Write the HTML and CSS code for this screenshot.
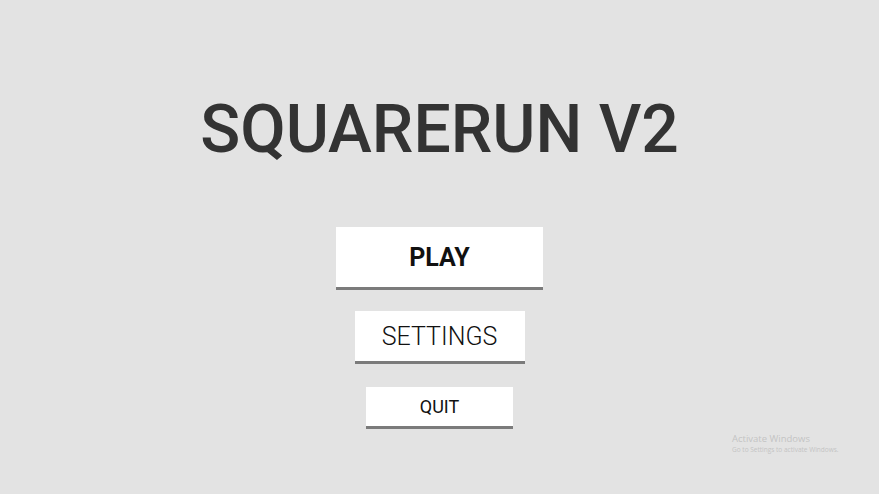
FILE: index.html
```html
<!DOCTYPE html>
<html>
<head>
<meta charset="utf-8">
<link rel="stylesheet" href="styles.css">
</head>
<body>
<main class="menu">
  <h1 class="title">SQUARERUN V2</h1>
  <div class="buttons">
    <button class="btn btn-play">PLAY</button>
    <button class="btn btn-settings">SETTINGS</button>
    <button class="btn btn-quit">QUIT</button>
  </div>
</main>
<div class="watermark">
  <div class="wm-title">Activate Windows</div>
  <div class="wm-sub">Go to Settings to activate Windows.</div>
</div>
</body>
</html>
```
FILE: styles.css
```css
html, body {
  margin: 0;
  padding: 0;
  width: 879px;
  height: 494px;
  overflow: hidden;
  background: #e3e3e3;
  font-family: Roboto, "Liberation Sans", sans-serif;
}
.menu {
  display: flex;
  flex-direction: column;
  align-items: center;
  padding-top: 91px;
}
.title {
  margin: 0;
  font-size: 66px;
  font-weight: 500;
  color: #333333;
  line-height: 77px;
  letter-spacing: 0;
}
.buttons {
  display: flex;
  flex-direction: column;
  align-items: center;
  margin-top: 59px;
}
.btn {
  border: none;
  border-bottom: 3px solid #7b7b7b;
  background: #ffffff;
  font-family: Roboto, "Liberation Sans", sans-serif;
  color: #111111;
  padding: 0;
  box-sizing: content-box;
}
.btn-play {
  width: 207px;
  height: 60px;
  font-size: 25px;
  font-weight: 700;
}
.btn-settings {
  width: 170px;
  height: 50px;
  margin-top: 21px;
  font-size: 25px;
  font-weight: 300;
}
.btn-quit {
  width: 147px;
  height: 39px;
  margin-top: 23px;
  font-size: 18px;
  font-weight: 400;
}
.watermark {
  position: absolute;
  left: 732px;
  top: 432px;
  color: #c4c4c4;
  font-family: "Open Sans", "Liberation Sans", sans-serif;
}
.wm-title {
  font-size: 9.5px;
  line-height: 13px;
}
.wm-sub {
  font-size: 6.5px;
  line-height: 9px;
}
```
